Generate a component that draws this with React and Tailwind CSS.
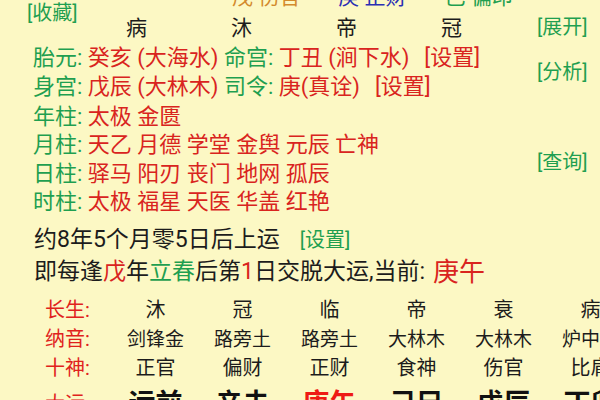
export default function App() {
  const G = "text-[#1f9f50]";
  const R = "text-[#d9241e]";
  const cols1 = ["沐", "冠", "临", "帝", "衰", "病"];
  const cols2 = ["剑锋金", "路旁土", "路旁土", "大林木", "大林木", "炉中火"];
  const cols3 = ["正官", "偏财", "正财", "食神", "伤官", "比肩"];
  const cols4 = ["运前", "辛未", "庚午", "己巳", "戊辰", "丁卯"];
  const Row = ({ label, items, cls }) => (
    <div className="flex h-[29px] items-center pl-[45px] leading-[29px]">
      <div className="w-[67px] shrink-0 text-[20px] text-[#e0221c]">{label}</div>
      {items.map((t, i) => (
        <div key={i} className={`w-[87px] shrink-0 whitespace-nowrap text-center ${cls}`}>
          {t}
        </div>
      ))}
    </div>
  );
  return (
    <div className="relative h-[400px] w-[600px] overflow-hidden bg-[#fcf8c4] font-['Roboto','Noto_Sans_CJK_SC',sans-serif] text-[#1c1c1c]">
      <div className="flex">
        <div className="flex flex-1 flex-col">
          <div className="-mt-[17px] flex h-[29px] items-start whitespace-nowrap pl-[232px] text-[21px] leading-[29px]">
            <span className="text-[#d38a2c]">戊 伤官</span>
            <span className="ml-[38px] text-[#2b2fb4]">庚 正财</span>
            <span className={`ml-[38px] ${G}`}>己 偏印</span>
          </div>
          <div className="mt-[2px] flex h-[29px] items-start pl-[27px]">
            <div className={`-mt-[11px] w-[57px] shrink-0 whitespace-nowrap text-[20px] leading-[20px] ${G}`}>
              [收藏]
            </div>
            <div className="grid grid-cols-[repeat(4,105px)] text-center text-[21px] leading-[29px]">
              <span>病</span>
              <span>沐</span>
              <span>帝</span>
              <span>冠</span>
            </div>
          </div>
          <div className="flex flex-col whitespace-nowrap pl-[33px] text-[22px]">
            <div className="h-[29px] leading-[29px]">
              <span className={G}>胎元: </span>
              <span className={R}>癸亥 (大海水) </span>
              <span className={G}>命宫: </span>
              <span className={R}>丁丑 (涧下水)</span>
              <span className={`ml-[15px] ${R}`}>[设置]</span>
            </div>
            <div className="h-[29px] leading-[29px]">
              <span className={G}>身宫: </span>
              <span className={R}>戊辰 (大林木) </span>
              <span className={G}>司令: </span>
              <span className={R}>庚(真诠)</span>
              <span className={`ml-[15px] ${R}`}>[设置]</span>
            </div>
            <div className="mt-[1px] h-[29px] leading-[29px]">
              <span className={G}>年柱: </span>
              <span className={R}>太极 金匮</span>
            </div>
            <div className="h-[28px] leading-[28px]">
              <span className={G}>月柱: </span>
              <span className={R}>天乙 月德 学堂 金舆 元辰 亡神</span>
            </div>
            <div className="h-[29px] leading-[29px]">
              <span className={G}>日柱: </span>
              <span className={R}>驿马 阳刃 丧门 地网 孤辰</span>
            </div>
            <div className="h-[28px] leading-[28px]">
              <span className={G}>时柱: </span>
              <span className={R}>太极 福星 天医 华盖 红艳</span>
            </div>
          </div>
        </div>
        <div className={`flex w-[63px] shrink-0 flex-col text-[20px] leading-[20px] ${G}`}>
          <span className="mt-[17px]">[展开]</span>
          <span className="mt-[25px]">[分析]</span>
          <span className="mt-[70px]">[查询]</span>
        </div>
      </div>
      <div className="mt-[8px] flex h-[32px] items-center whitespace-nowrap pl-[34px] text-[23px] leading-[32px]">
        <span>约8年5个月零5日后上运</span>
        <span className={`ml-[20px] text-[20px] ${G}`}>[设置]</span>
      </div>
      <div className="flex h-[32px] items-center whitespace-nowrap pl-[34px] text-[23px] leading-[32px]">
        <span>即每逢</span>
        <span className={R}>戊</span>
        <span>年</span>
        <span className={G}>立春</span>
        <span>后第</span>
        <span className={R}>1</span>
        <span>日交脱大运,当前: </span>
        <span className={`ml-[8px] text-[26px] ${R}`}>庚午</span>
      </div>
      <div className="mt-[8px] flex flex-col">
        <Row label="长生:" items={cols1} cls="text-[20px]" />
        <Row label="纳音:" items={cols2} cls="text-[19px]" />
        <Row label="十神:" items={cols3} cls="text-[20px]" />
        <div className="flex h-[42px] items-center pl-[45px] leading-[42px]">
          <div className="w-[67px] shrink-0 text-[20px] text-[#e0221c]">大运:</div>
          {cols4.map((t, i) => (
            <div
              key={i}
              className={`w-[87px] shrink-0 whitespace-nowrap text-center text-[27px] font-bold ${i === 2 ? "text-[#ee1b14]" : "text-[#111]"}`}
            >
              {t}
            </div>
          ))}
        </div>
      </div>
    </div>
  );
}
